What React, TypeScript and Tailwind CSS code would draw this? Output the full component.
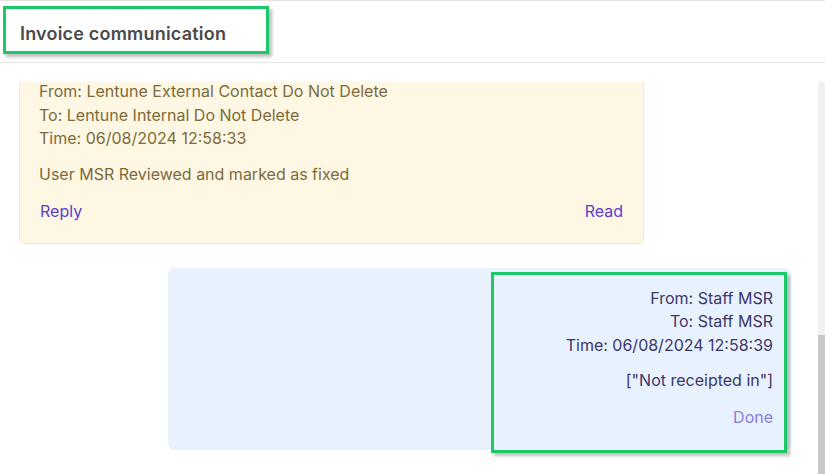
import type { ReactNode } from "react";

type Message = {
    from: string;
    to: string;
    time: string;
    body: string;
};

const incoming: Message = {
    from: "Lentune External Contact Do Not Delete",
    to: "Lentune Internal Do Not Delete",
    time: "06/08/2024 12:58:33",
    body: "User MSR Reviewed and marked as fixed",
};

const outgoing: Message = {
    from: "Staff MSR",
    to: "Staff MSR",
    time: "06/08/2024 12:58:39",
    body: "[\"Not receipted in\"]",
};

function Highlight({ className, children }: { className: string; children?: ReactNode }) {
    // green annotation frame drawn over the screenshot
    return (
        <div className={"pointer-events-none absolute border-[3px] border-[#1cc968] shadow-[3px_3px_3px_rgba(0,0,0,0.25)] " + className}>
            {children}
        </div>
    );
}

function Meta({ msg }: { msg: Message }) {
    return (
        <div className="leading-[23.5px]">
            <div>From: {msg.from}</div>
            <div>To: {msg.to}</div>
            <div>Time: {msg.time}</div>
        </div>
    );
}

export default function App() {
    return (
        <div
            className="relative w-[825px] h-[474px] overflow-hidden bg-white border-t border-[#e3e3e3] text-[16px]"
            style={{ fontFamily: "Inter, 'Noto Sans', sans-serif" }}>

            <div className="h-[62px] border-b border-[#e6e6e6] flex items-center pl-5 pt-[3px]">
                <h4 className="text-[18px] font-semibold text-[#4a4a4a] tracking-[0.2px]">
                    Invoice communication
                </h4>
            </div>

            <div className="relative mt-[19px] h-[392px] overflow-hidden">
                <div className="absolute right-0 top-0 w-[7px] h-full bg-[#f1f1f1] flex flex-col">
                    <div className="mt-[253px] flex-1 bg-[#c8c8c8]" />
                </div>

                <div className="-mt-[19px] pr-[34px] flex flex-col gap-[24px]">
                    <div className="ml-[19px] w-[625px] bg-[#fdf7e3] border border-[#f4eac6] rounded-md pt-[16px] pb-[19px] px-[19px] text-[#7d6a3b]">
                        <Meta msg={incoming} />
                        <div className="mt-[12px] leading-[23.5px]">{incoming.body}</div>
                        <div className="mt-[14px] flex justify-between leading-[23.5px] text-[#5b3fcf] px-[1px]">
                            <span>Reply</span>
                            <span>Read</span>
                        </div>
                    </div>

                    <div className="ml-[168px] w-[623px] bg-[#e8f2fe] rounded-md pt-[19px] pb-[21px] pr-[18px] text-right text-[#3d3667]">
                        <Meta msg={outgoing} />
                        <div className="mt-[12px] leading-[23.5px]">{outgoing.body}</div>
                        <div className="mt-[13px] leading-[23.5px] text-[#8b7bdb]">Done</div>
                    </div>
                </div>
            </div>

            <Highlight className="left-[3px] top-[5px] w-[266px] h-[48px]" />
            <Highlight className="left-[491px] top-[271px] w-[296px] h-[181px]" />
        </div>
    );
}
